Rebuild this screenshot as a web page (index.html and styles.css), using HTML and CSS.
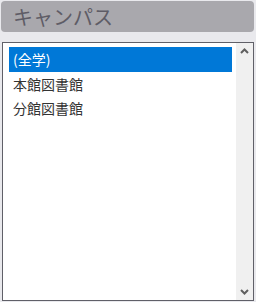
FILE: index.html
```html
<!DOCTYPE html>
<html lang="ja">
<head>
    <meta charset="UTF-8">
    <title>キャンパス</title>
    <link rel="stylesheet" href="styles.css">
</head>
<body>
    <div class="panel">
        <div class="panel-title">キャンパス</div>

        <div class="listbox">
            <ul class="options">
                <li class="option selected">(全学)</li>
                <li class="option">本館図書館</li>
                <li class="option">分館図書館</li>
            </ul>
            <div class="scrollbar">
                <svg class="arrow" width="9" height="6" viewBox="0 0 9 6">
                    <path d="M1 5 L4.5 1.5 L8 5" fill="none" stroke="#5f5f5f" stroke-width="2"/>
                </svg>
                <svg class="arrow" width="9" height="6" viewBox="0 0 9 6">
                    <path d="M1 1 L4.5 4.5 L8 1" fill="none" stroke="#5f5f5f" stroke-width="2"/>
                </svg>
            </div>
        </div>
    </div>
</body>
</html>
```

FILE: styles.css
```css
body {
    margin: 0;
    background-color: #e9e9ed;
    font-family: "Noto Sans CJK JP", "Noto Sans", sans-serif;
}

.panel {
    width: 256px;
    height: 302px;
    padding: 1px 2px 1px 1px;
    box-sizing: border-box;
    display: flex;
    flex-direction: column;
}

.panel-title {
    height: 31px;
    padding-left: 12px;
    background-color: #a9a8ad;
    border-radius: 4px;
    color: #5e5c66;
    font-size: 20px;
    line-height: 31px;
}

.listbox {
    margin: 10px 0 0 1px;
    height: 259px;
    display: flex;
    background-color: #fff;
    border: 1px solid #606068;
    box-sizing: border-box;
}

.options {
    list-style: none;
    margin: 0;
    padding: 4px 4px 0 6px;
    flex: 1;
}

.option {
    height: 24px;
    padding-left: 4px;
    color: #333;
    font-size: 14px;
    line-height: 24px;
}

.option.selected {
    height: 25px;
    line-height: 25px;
    background-color: #0078d7;
    color: #fff;
}

.scrollbar {
    width: 17px;
    background-color: #f0f0f0;
    display: flex;
    flex-direction: column;
    justify-content: space-between;
    align-items: center;
    padding: 5px 0 5px;
}
```
